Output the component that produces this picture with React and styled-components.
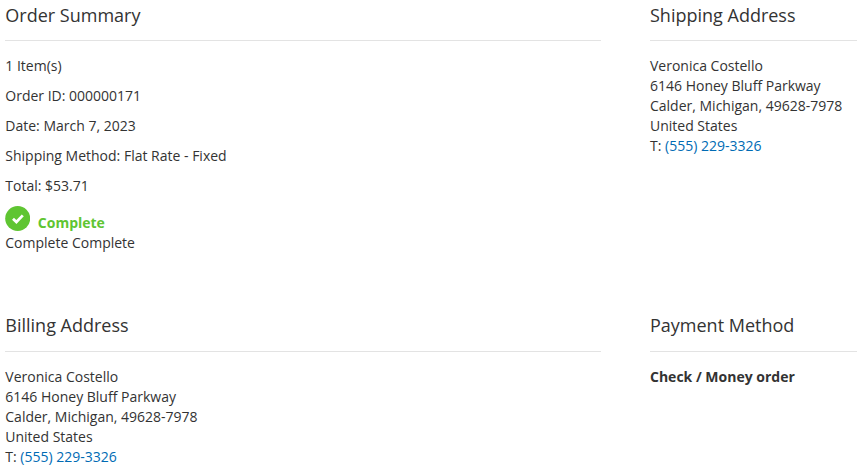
import React from 'react'
import styled, { createGlobalStyle } from 'styled-components'

const Global = createGlobalStyle`
  html, body { margin: 0; padding: 0; background: #fff; }
  body { font-family: "Open Sans", sans-serif; font-size: 14px; line-height: 20px; color: #333; }
`

const Page = styled.div`
  width: 857px;
  height: 476px;
  overflow: hidden;
  padding-left: 5.3px;
  box-sizing: border-box;
  display: grid;
  grid-template-columns: 595.7px 207px;
  column-gap: 49px;
  grid-template-rows: 310.6px auto;
`

const Section = styled.section``

const Title = styled.h2`
  margin: 0 0 15px;
  height: 41px;
  padding-top: 3.6px;
  box-sizing: border-box;
  font-size: 18px;
  font-weight: 400;
  line-height: 23px;
  border-bottom: 1px solid #e3e3e3;
`

const Line = styled.div`
  margin-bottom: 10px;
`

const Status = styled.div`
  display: flex;
  align-items: flex-end;
  gap: 7.5px;
  height: 27px;
  color: #5fc532;
  font-weight: 700;
  line-height: 20px;
`

const StatusIcon = styled.svg`
  width: 25px;
  height: 25px;
  flex: none;
  align-self: flex-start;
`

const Address = styled.address`
  font-style: normal;
`

const Phone = styled.a`
  color: #006bb4;
  text-decoration: none;
`

const Method = styled.div`
  font-weight: 700;
`

const AddressBlock = () => (
  <Address>
    Veronica Costello<br />
    6146 Honey Bluff Parkway<br />
    Calder, Michigan, 49628-7978<br />
    United States<br />
    T: <Phone href="#">(555) 229-3326</Phone>
  </Address>
)

export default function App() {
  return (
    <Page>
      <Global />
      <Section>
        <Title>Order Summary</Title>
        <Line>1 Item(s)</Line>
        <Line>Order ID: 000000171</Line>
        <Line>Date: March 7, 2023</Line>
        <Line>Shipping Method: Flat Rate - Fixed</Line>
        <Line>Total: $53.71</Line>
        <Status>
          <StatusIcon viewBox="0 0 25 25">
            <circle cx="12.7" cy="12.5" r="12.5" fill="#5fc532" />
            <path d="M8 12.8l3.4 3.2 6.4-6.6" fill="none" stroke="#fff" strokeWidth="2.8" />
          </StatusIcon>
          Complete
        </Status>
        <div>Complete Complete</div>
      </Section>
      <Section>
        <Title>Shipping Address</Title>
        <AddressBlock />
      </Section>
      <Section>
        <Title>Billing Address</Title>
        <AddressBlock />
      </Section>
      <Section>
        <Title>Payment Method</Title>
        <Method>Check / Money order</Method>
      </Section>
    </Page>
  )
}
